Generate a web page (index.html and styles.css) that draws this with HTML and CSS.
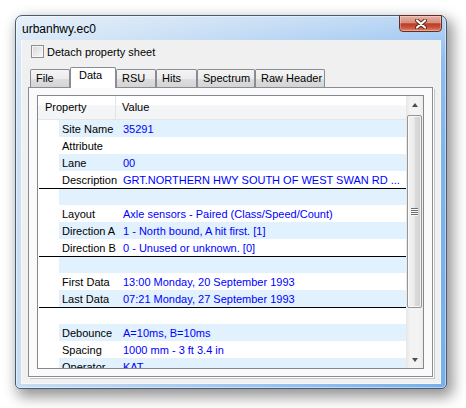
FILE: index.html
```html
<!DOCTYPE html>
<html>
<head>
<meta charset="utf-8">
<title>urbanhwy.ec0</title>
<link rel="stylesheet" href="styles.css">
</head>
<body>
<div class="window">
  <div class="titlebar">
    <span class="title">urbanhwy.ec0</span>
    <div class="close">
      <svg width="12" height="10" viewBox="0 0 12 10">
        <path d="M2 1.5 L10 8.5 M10 1.5 L2 8.5" stroke="#5a2418" stroke-width="4" stroke-linecap="round" fill="none"/>
        <path d="M2 1.5 L10 8.5 M10 1.5 L2 8.5" stroke="#ffffff" stroke-width="2.2" stroke-linecap="round" fill="none"/>
      </svg>
    </div>
  </div>
  <div class="client">
    <div class="detach"><span class="checkbox"></span><span>Detach property sheet</span></div>
    <div class="tabs">
      <div class="tab t-file">File</div>
      <div class="tab t-data sel">Data</div>
      <div class="tab t-rsu">RSU</div>
      <div class="tab t-hits">Hits</div>
      <div class="tab t-spec">Spectrum</div>
      <div class="tab t-raw">Raw Header</div>
    </div>
    <div class="panel">
      <div class="list">
        <div class="main">
          <div class="header">
            <div class="hprop">Property</div>
            <div class="hval">Value</div>
          </div>
          <div class="rows">
            <div class="row"><div class="cells"><span class="prop">Site Name</span><span class="val">35291</span></div></div>
            <div class="row"><div class="cells"><span class="prop">Attribute</span><span class="val"></span></div></div>
            <div class="row"><div class="cells"><span class="prop">Lane</span><span class="val">00</span></div></div>
            <div class="row"><div class="cells"><span class="prop">Description</span><span class="val">GRT.NORTHERN HWY SOUTH OF WEST SWAN RD ...</span></div></div>
            <div class="row sep"><div class="cells"></div></div>
            <div class="row"><div class="cells"><span class="prop">Layout</span><span class="val">Axle sensors - Paired (Class/Speed/Count)</span></div></div>
            <div class="row"><div class="cells"><span class="prop">Direction A</span><span class="val">1 - North bound, A hit first. [1]</span></div></div>
            <div class="row"><div class="cells"><span class="prop">Direction B</span><span class="val">0 - Unused or unknown. [0]</span></div></div>
            <div class="row sep"><div class="cells"></div></div>
            <div class="row"><div class="cells"><span class="prop">First Data</span><span class="val">13:00 Monday, 20 September 1993</span></div></div>
            <div class="row"><div class="cells"><span class="prop">Last Data</span><span class="val">07:21 Monday, 27 September 1993</span></div></div>
            <div class="row sep"><div class="cells"></div></div>
            <div class="row"><div class="cells"><span class="prop">Debounce</span><span class="val">A=10ms, B=10ms</span></div></div>
            <div class="row"><div class="cells"><span class="prop">Spacing</span><span class="val">1000 mm - 3 ft 3.4 in</span></div></div>
            <div class="row"><div class="cells"><span class="prop">Operator</span><span class="val">KAT</span></div></div>
          </div>
        </div>
        <div class="scroll">
          <div class="sb-btn"><span class="arrow-up"></span></div>
          <div class="sb-track">
            <div class="thumb"><span class="grip"></span></div>
          </div>
          <div class="sb-btn"><span class="arrow-down"></span></div>
        </div>
      </div>
    </div>
  </div>
</div>
</body>
</html>
```

FILE: styles.css
```css
* { box-sizing: border-box; }
html, body { margin: 0; padding: 0; background: #ffffff; }
body {
  width: 466px;
  height: 408px;
  overflow: hidden;
  font-family: "Liberation Sans", Arial, sans-serif;
  font-size: 11px;
  color: #000;
  padding-top: 15px;
}

.window {
  margin: 0 0 0 15px;
  width: 432px;
  height: 374px;
  border: 1px solid #4a5a70;
  border-radius: 7px 7px 5px 5px;
  background:
    linear-gradient(to bottom, rgba(255,255,255,0.45) 0, rgba(255,255,255,0.1) 12%, rgba(255,255,255,0) 40%),
    linear-gradient(100deg, #d0e3f6 0%, #b4d2f1 35%, #8fbdee 75%, #76afea 100%);
  box-shadow: 4px 6px 14px 2px rgba(0,0,0,0.42), inset 0 0 0 1px rgba(255,255,255,0.45);
  display: flex;
  flex-direction: column;
}

.titlebar {
  flex: none;
  height: 24px;
  display: flex;
  justify-content: space-between;
  align-items: flex-start;
  padding-left: 6px;
}
.title {
  font-size: 12px;
  line-height: 14px;
  padding-top: 6px;
  color: #000;
}
.close {
  width: 43px;
  height: 17px;
  margin-top: -1px;
  margin-right: 4px;
  border: 1px solid #6a2b20;
  border-radius: 0 0 4px 4px;
  background: linear-gradient(#e6b2a4 0%, #d68e7c 45%, #bd3b24 52%, #c8503a 75%, #de8a6f 100%);
  box-shadow: inset 0 0 0 1px rgba(255,255,255,0.3);
  display: flex;
  align-items: center;
  justify-content: center;
}

.client {
  flex: 1;
  min-height: 0;
  margin: 0 5px 4px 5px;
  background: #f0f0f0;
  border: 1px solid #f6f8fa;
  border-top: none;
  display: flex;
  flex-direction: column;
}

.detach {
  flex: none;
  display: flex;
  align-items: center;
  height: 13px;
  margin: 5px 0 0 9px;
}
.checkbox {
  width: 13px;
  height: 13px;
  margin-right: 3px;
  border: 1px solid #8e8f8f;
  background: linear-gradient(135deg, #d6d6d6 0%, #ececec 60%, #fbfbfb 100%);
  box-shadow: inset 0 0 0 1px #f6f6f6;
}

.tabs {
  flex: none;
  display: flex;
  align-items: flex-end;
  height: 20px;
  margin: 9px 0 0 8px;
}
.tab {
  height: 18px;
  border: 1px solid #898c95;
  border-bottom: none;
  border-radius: 2px 2px 0 0;
  padding: 1px 0 0 5px;
  line-height: 15px;
  white-space: nowrap;
  background: linear-gradient(#f4f4f4 0%, #ececec 50%, #dedede 52%, #d4d4d4 100%);
}
.tab.sel {
  height: 21px;
  margin-bottom: -1px;
  padding: 0 0 0 8px;
  position: relative;
  z-index: 1;
  background: #ffffff;
}
.t-file { width: 40px; }
.t-data { width: 46px; }
.t-rsu { width: 40px; }
.t-hits { width: 41px; }
.t-spec { width: 58px; }
.t-raw { width: 70px; }

.panel {
  flex: 1;
  min-height: 0;
  margin: 0 7px 6px 6px;
  border: 1px solid #898c95;
  background: #fafafa;
  box-shadow: 1px 1px 0 #ffffff, 2px 2px 0 #c4c4c4;
  padding: 7px 8px;
  display: flex;
  flex-direction: column;
}

.list {
  flex: 1;
  min-height: 0;
  display: flex;
  border: 1px solid #828790;
  background: #ffffff;
  overflow: hidden;
}
.main {
  flex: 1;
  min-width: 0;
  min-height: 0;
  display: flex;
  flex-direction: column;
  overflow: hidden;
}

.header {
  height: 24px;
  flex: none;
  display: flex;
  border-bottom: 1px solid #e5e5e5;
  background: linear-gradient(#ffffff 0%, #ffffff 40%, #f4f5f7 42%, #f3f4f6 100%);
}
.hprop {
  width: 78px;
  padding-left: 7px;
  line-height: 22px;
  border-right: 1px solid #e2e3e5;
}
.hval {
  padding-left: 6px;
  line-height: 22px;
}

.rows { flex: none; }
.row {
  height: 17px;
  margin-left: 1px;
  padding-left: 20px;
}
.row.sep { border-top: 1px solid #000000; }
.cells {
  height: 100%;
  display: flex;
  align-items: center;
  white-space: nowrap;
}
.row:nth-child(odd) .cells { background: #e1f1fd; }
.prop {
  width: 56px;
  flex: none;
  padding-left: 3px;
}
.val {
  padding-left: 8px;
  color: #0000ff;
}

.scroll {
  width: 17px;
  flex: none;
  display: flex;
  flex-direction: column;
  background: linear-gradient(to right, #e6e6e6 0%, #f3f3f3 25%, #f3f3f3 75%, #ebebeb 100%);
}
.sb-btn {
  height: 17px;
  flex: none;
  display: flex;
  align-items: center;
  justify-content: center;
}
.arrow-up {
  width: 0;
  height: 0;
  border-left: 3.5px solid transparent;
  border-right: 3.5px solid transparent;
  border-bottom: 4px solid #4e4e4e;
}
.arrow-down {
  width: 0;
  height: 0;
  border-left: 3.5px solid transparent;
  border-right: 3.5px solid transparent;
  border-top: 4px solid #4e4e4e;
}
.sb-track {
  flex: 1;
  min-height: 0;
  display: flex;
  flex-direction: column;
}
.thumb {
  margin: 2px 0 0 1px;
  width: 15px;
  height: 193px;
  flex: none;
  border: 1px solid #959595;
  border-radius: 2px;
  background: linear-gradient(to right, #f2f2f2 0%, #ececec 45%, #dcdcdc 55%, #cfcfcf 100%);
  box-shadow: inset 0 0 0 1px rgba(255,255,255,0.7);
  display: flex;
  align-items: center;
  justify-content: center;
}
.grip {
  width: 7px;
  height: 8px;
  background: repeating-linear-gradient(to bottom, #6e6e6e 0, #6e6e6e 1px, #f8f8f8 1px, #f8f8f8 2px);
}
```
